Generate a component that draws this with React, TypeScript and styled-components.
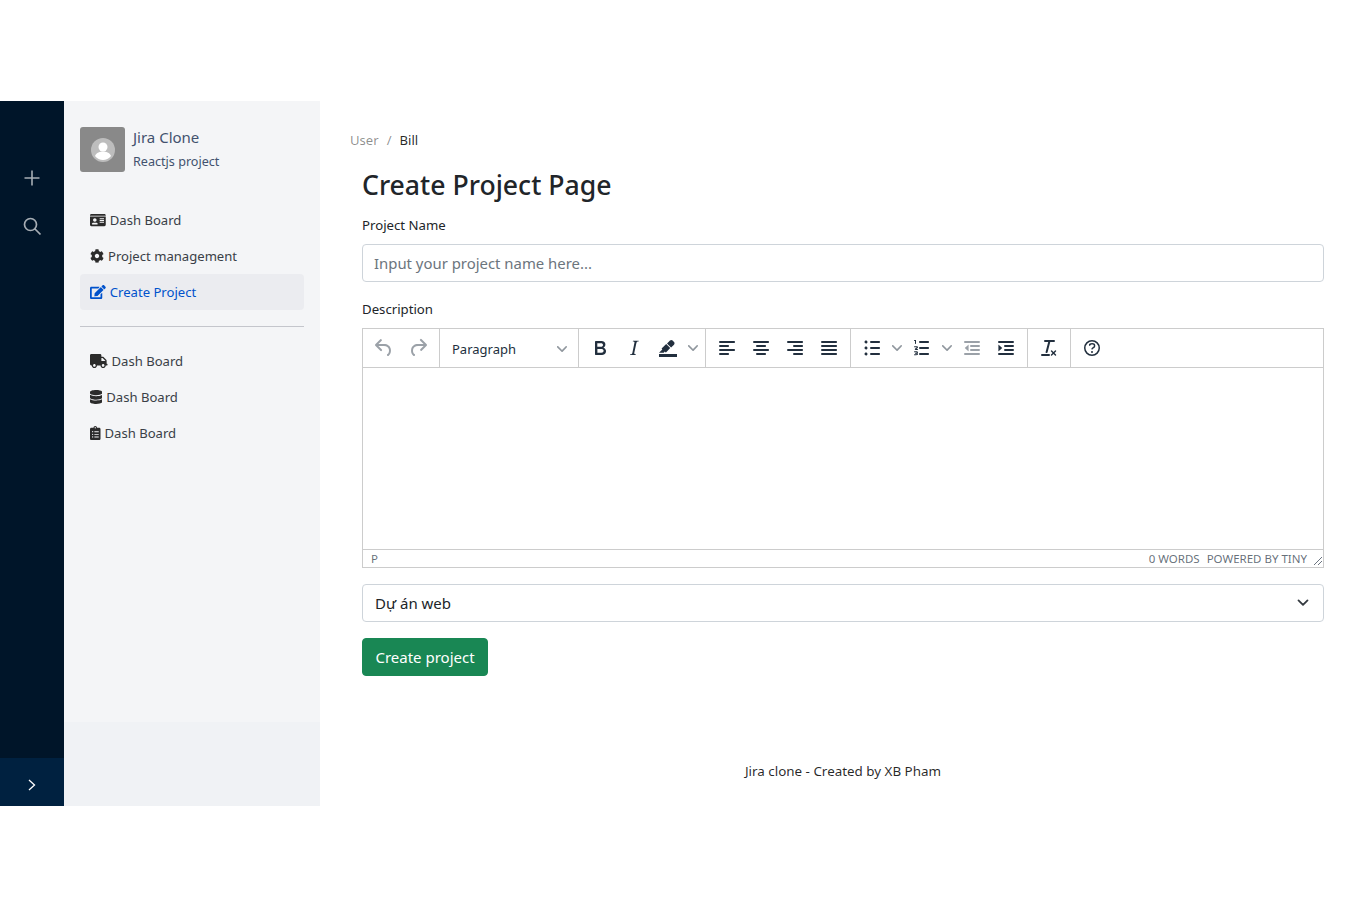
import React from "react";
import styled, { createGlobalStyle } from "styled-components";
import { FaIdCard, FaCog, FaEdit, FaTruck, FaDatabase, FaClipboardList } from "react-icons/fa";

const Global = createGlobalStyle`
  * { box-sizing: border-box; }
  html, body { margin: 0; background: #fff; }
  body { font-family: "Noto Sans", "Open Sans", sans-serif; font-size: 16px; color: #212529; }
`;

const Page = styled.div`
  padding-top: 101px;
  height: 907px;
`;
const Layout = styled.div`
  display: flex;
  height: 705px;
`;
const Rail = styled.aside`
  width: 64px;
  background: #001529;
  display: flex;
  flex-direction: column;
  align-items: center;
`;
const RailIcons = styled.div`
  flex: 1;
  padding-top: 65px;
  display: flex;
  flex-direction: column;
  gap: 24px;
  align-items: center;
  color: rgba(255, 255, 255, 0.65);
`;
const RailToggle = styled.div`
  width: 100%;
  height: 48px;
  padding-top: 6px;
  background: #002140;
  color: #fff;
  display: flex;
  align-items: center;
  justify-content: center;
`;
const SideWrap = styled.div`
  width: 256px;
  background: #f0f2f5;
`;
const Side = styled.nav`
  height: 621px;
  background: #f4f5f7;
  padding: 26px 16px 0;
`;
const Brand = styled.div`
  display: flex;
  gap: 8px;
  margin-bottom: 30px;
`;
const Avatar = styled.div`
  width: 45px;
  height: 45px;
  border-radius: 3px;
  background: #898989;
  display: flex;
  align-items: center;
  justify-content: center;
`;
const BrandText = styled.div`
  display: flex;
  flex-direction: column;
  color: #42526e;
`;
const BrandTitle = styled.div`
  font-size: 15px;
  line-height: 22px;
  margin-top: -1px;
`;
const BrandSub = styled.div`
  font-size: 12.6px;
  line-height: 20px;
  margin-top: 4px;
`;
const Item = styled.div<{ $active?: boolean; $iconWidth: number }>`
  height: 36px;
  display: flex;
  align-items: center;
  gap: 4px;
  padding: 0 10px;
  font-size: 13.1px;
  border-radius: 4px;
  color: ${(p) => (p.$active ? "#0052cc" : "#3a3f47")};
  background: ${(p) => (p.$active ? "#ebecf0" : "transparent")};
  svg {
    height: 14px;
    width: ${(p) => p.$iconWidth}px;
    flex: none;
    color: ${(p) => (p.$active ? "#0052cc" : "#2b2b2b")};
  }
`;
const Divider = styled.hr`
  border: 0;
  height: 1px;
  background: #c4c6cc;
  margin: 16px 0;
`;
const Main = styled.main`
  flex: 1;
  min-width: 0;
  display: flex;
  flex-direction: column;
`;
const Content = styled.div`
  flex: 1;
  padding: 28px 42px 0 30px;
`;
const Crumbs = styled.div`
  font-size: 13.1px;
  line-height: 22px;
  color: rgba(0, 0, 0, 0.45);
  display: flex;
  gap: 8px;
  margin-bottom: 17px;
`;
const CrumbNow = styled.span`
  color: rgba(0, 0, 0, 0.85);
`;
const Form = styled.div`
  padding-left: 12px;
`;
const Title = styled.h3`
  margin: 0 0 13px;
  font-size: 26.6px;
  font-weight: 500;
  line-height: 34px;
  color: #212529;
`;
const Label = styled.label`
  display: block;
  font-size: 13.2px;
  line-height: 21px;
  margin-bottom: 8px;
`;
const Field = styled.div`
  margin-bottom: 17px;
`;
const Input = styled.input`
  display: block;
  width: 100%;
  height: 38px;
  border: 1px solid #ced4da;
  border-radius: 4px;
  padding: 6px 11px;
  font: inherit;
  font-size: 14.9px;
  color: #212529;
  &::placeholder { color: #6c757d; opacity: 1; }
`;
const Editor = styled.div`
  height: 240px;
  border: 1px solid #ccc;
  display: flex;
  flex-direction: column;
`;
const Toolbar = styled.div`
  height: 39px;
  border-bottom: 1px solid #ccc;
  display: flex;
`;
const Group = styled.div`
  display: flex;
  align-items: center;
  padding: 0 4px;
  border-right: 1px solid #ccc;
  &:last-child { border-right: 0; }
`;
const Tool = styled.span<{ $muted?: boolean; $wide?: boolean }>`
  width: ${(p) => (p.$wide ? 50 : 34)}px;
  height: 34px;
  display: flex;
  align-items: center;
  color: ${(p) => (p.$muted ? "rgba(34,47,62,.45)" : "#222f3e")};
  padding-left: 5px;
  flex-shrink: 0;
  svg { fill: currentColor; display: block; flex-shrink: 0; }
`;
const Chevron = styled.svg`
  margin-left: 8px;
  &&& { fill: rgba(34, 47, 62, 0.5); }
`;
const FormatSelect = styled.div`
  width: 139px;
  height: 38px;
  padding: 1px 11px 0 12px;
  border-right: 1px solid #ccc;
  display: flex;
  align-items: center;
  justify-content: space-between;
  font-size: 13px;
  color: #222f3e;
`;
const EditArea = styled.div`
  flex: 1;
`;
const Status = styled.div`
  height: 18px;
  border-top: 1px solid #ccc;
  display: flex;
  align-items: center;
  padding: 0 0 0 8px;
  font-size: 11.5px;
  color: rgba(34, 47, 62, 0.7);
`;
const StatusRight = styled.div`
  margin-left: auto;
  display: flex;
  align-items: center;
  gap: 7px;
  text-transform: uppercase;
`;
const Grip = styled.svg`
  align-self: flex-end;
  margin-left: -1px;
`;
const SelectWrap = styled.div`
  position: relative;
  margin: 16px 0;
`;
const Select = styled.select`
  display: block;
  width: 100%;
  height: 38px;
  appearance: none;
  background: #fff;
  border: 1px solid #ced4da;
  border-radius: 4px;
  padding: 0 36px 0 12px;
  font: inherit;
  font-size: 15px;
  color: #212529;
`;
const SelectArrow = styled.svg`
  position: absolute;
  right: 15px;
  top: 14px;
  pointer-events: none;
`;
const Button = styled.button`
  display: block;
  width: 126px;
  height: 38px;
  border: 1px solid #198754;
  border-radius: 4px;
  background: #198754;
  color: #fff;
  font: inherit;
  font-size: 15px;
  padding: 0;
`;
const Footer = styled.footer`
  height: 70px;
  display: flex;
  align-items: center;
  justify-content: center;
  font-size: 13.4px;
  color: rgba(0, 0, 0, 0.85);
`;

const P = ({ d, s = 24 }: { d: string; s?: number }) => (
  <svg width={s} height={s} viewBox="0 0 24 24"><path d={d} fillRule="evenodd" /></svg>
);
const Down = () => (
  <Chevron width="10" height="10" viewBox="0 0 10 10"><path d="M8.7 2.2c.3-.3.8-.3 1 0 .4.4.4.9 0 1.2L5.7 7.800c-.3.3-.9.3-1.200 0L.2 3.400a.8.8 0 0 1 0-1.200c.3-.3.8-.3 1.100 0L5 6l3.700-3.800z" /></Chevron>
);

const I = {
  undo: "M6.4 8H12c3.7 0 6.2 2 6.8 5.1.6 2.7-.4 5.6-2.3 6.8a1 1 0 0 1-1-1.8c1.1-.6 1.8-2.7 1.4-4.6-.5-2.1-2.1-3.5-4.9-3.5H6.4l3.3 3.3a1 1 0 1 1-1.4 1.4l-5-5a1 1 0 0 1 0-1.4l5-5a1 1 0 0 1 1.4 1.4L6.4 8z",
  redo: "M17.6 10H12c-2.8 0-4.4 1.4-4.9 3.5-.4 2 .3 4 1.4 4.6a1 1 0 1 1-1 1.8c-2-1.2-2.9-4.1-2.3-6.8.6-3 3-5.1 6.8-5.1h5.6l-3.3-3.3a1 1 0 1 1 1.4-1.4l5 5a1 1 0 0 1 0 1.4l-5 5a1 1 0 0 1-1.4-1.4l3.3-3.3z",
  bold: "M7.8 19c-.3 0-.5 0-.6-.2l-.2-.5V5.700c0-.2 0-.4.2-.5l.6-.2h5c1.500 0 2.700.3 3.500 1 .7.6 1.100 1.400 1.100 2.500a3 3 0 0 1-.6 1.900c-.4.6-1 1-1.600 1.200.4.1.9.3 1.300.6s.8.7 1 1.200c.4.4.5 1 .5 1.600 0 1.300-.4 2.300-1.300 3-.8.7-2.100 1-3.800 1H7.800zm5-8.300c.6 0 1.200-.1 1.600-.5.4-.3.6-.7.6-1.300 0-1.100-.8-1.700-2.300-1.700H9.300v3.500h3.400zm.5 6c.7 0 1.300-.1 1.700-.4.4-.4.6-.9.6-1.500s-.2-1-.7-1.400c-.4-.3-1-.4-2-.4H9.400v3.800h4z",
  italic: "M16.7 4.7l-.1.9h-.3c-.6 0-1 0-1.4.3-.3.3-.4.6-.5 1.1l-2.1 9.8v.6c0 .5.4.8 1.4.8h.2l-.2.8H8l.2-.8h.2c1.1 0 1.8-.5 2-1.5l2-9.8.1-.5c0-.6-.4-.8-1.4-.8h-.3l.2-.9h5.8z",
  mark: "M3 18h18v3H3zM7.7 16.7H3l3.3-3.3-.7-.8L10.2 8l4 4.1-4 4.2c-.2.2-.6.2-.8 0l-.6-.7-1.1 1.1zm5-7.5L11 7.4l3-2.9a2 2 0 0 1 2.6 0L18 6c.7.7.7 2 0 2.7l-2.9 2.9-1.8-1.8-.5-.6",
  left: "M5 5h14c.6 0 1 .4 1 1s-.4 1-1 1H5a1 1 0 1 1 0-2zm0 4h8c.6 0 1 .4 1 1s-.4 1-1 1H5a1 1 0 1 1 0-2zm0 8h8c.6 0 1 .4 1 1s-.4 1-1 1H5a1 1 0 0 1 0-2zm0-4h14c.6 0 1 .4 1 1s-.4 1-1 1H5a1 1 0 0 1 0-2z",
  center: "M5 5h14c.6 0 1 .4 1 1s-.4 1-1 1H5a1 1 0 1 1 0-2zm3 4h8c.6 0 1 .4 1 1s-.4 1-1 1H8a1 1 0 1 1 0-2zm0 8h8c.6 0 1 .4 1 1s-.4 1-1 1H8a1 1 0 0 1 0-2zm-3-4h14c.6 0 1 .4 1 1s-.4 1-1 1H5a1 1 0 0 1 0-2z",
  right: "M5 5h14c.6 0 1 .4 1 1s-.4 1-1 1H5a1 1 0 1 1 0-2zm6 4h8c.6 0 1 .4 1 1s-.4 1-1 1h-8a1 1 0 0 1 0-2zm0 8h8c.6 0 1 .4 1 1s-.4 1-1 1h-8a1 1 0 0 1 0-2zm-6-4h14c.6 0 1 .4 1 1s-.4 1-1 1H5a1 1 0 0 1 0-2z",
  justify: "M5 5h14c.6 0 1 .4 1 1s-.4 1-1 1H5a1 1 0 1 1 0-2zm0 4h14c.6 0 1 .4 1 1s-.4 1-1 1H5a1 1 0 1 1 0-2zm0 4h14c.6 0 1 .4 1 1s-.4 1-1 1H5a1 1 0 0 1 0-2zm0 4h14c.6 0 1 .4 1 1s-.4 1-1 1H5a1 1 0 0 1 0-2z",
  ul: "M11 5h8c.6 0 1 .4 1 1s-.4 1-1 1h-8a1 1 0 0 1 0-2zm0 6h8c.6 0 1 .4 1 1s-.4 1-1 1h-8a1 1 0 0 1 0-2zm0 6h8c.6 0 1 .4 1 1s-.4 1-1 1h-8a1 1 0 0 1 0-2zM4.5 6c0-.4.1-.8.4-1 .3-.4.7-.5 1.1-.5.4 0 .8.1 1 .4.4.3.5.7.5 1.1 0 .4-.1.8-.4 1-.3.4-.7.5-1.1.5-.4 0-.8-.1-1-.4-.4-.3-.5-.7-.5-1.1zm0 6c0-.4.1-.8.4-1 .3-.4.7-.5 1.1-.5.4 0 .8.1 1 .4.4.3.5.7.5 1.1 0 .4-.1.8-.4 1-.3.4-.7.5-1.1.5-.4 0-.8-.1-1-.4-.4-.3-.5-.7-.5-1.1zm0 6c0-.4.1-.8.4-1 .3-.4.7-.5 1.1-.5.4 0 .8.1 1 .4.4.3.5.7.5 1.1 0 .4-.1.8-.4 1-.3.4-.7.5-1.1.5-.4 0-.8-.1-1-.4-.4-.3-.5-.7-.5-1.1z",
  ol: "M10 17h8c.6 0 1 .4 1 1s-.4 1-1 1h-8a1 1 0 0 1 0-2zm0-6h8c.6 0 1 .4 1 1s-.4 1-1 1h-8a1 1 0 0 1 0-2zm0-6h8c.6 0 1 .4 1 1s-.4 1-1 1h-8a1 1 0 1 1 0-2zM6 4v3.500c0 .3-.2.5-.5.5a.5.5 0 0 1-.5-.5V5h-.5a.5.5 0 0 1 0-1H6zm-1 8.800l.2-.2 1.500-1.200-.1-.2H4.500a.5.5 0 1 1 0-1h2.100c.8 0 1.400.4 1.400 1 0 .4-.2.8-.6 1.100l-1 .8H7.500a.5.5 0 1 1 0 1H5.500c-.4 0-.7-.2-.7-.5s.1-.6.2-.8zm2.200 4.200c.5.2.8.5.8 1 0 .8-.8 1.200-1.700 1.200H4.500a.5.5 0 1 1 0-1h1.800c.3 0 .5-.1.5-.2s-.2-.3-.5-.3H5.500a.5.5 0 1 1 0-1h.8c.3 0 .5-.1.5-.2s-.2-.2-.5-.2H4.500a.5.5 0 1 1 0-1h1.800c.9 0 1.700.4 1.700 1.200 0 .4-.3.7-.8.8z",
  outdent: "M19 5a1 1 0 0 1 0 2H5a1 1 0 1 1 0-2h14zm0 4a1 1 0 0 1 0 2h-8a1 1 0 0 1 0-2h8zm0 4a1 1 0 0 1 0 2h-8a1 1 0 0 1 0-2h8zm0 4a1 1 0 0 1 0 2H5a1 1 0 0 1 0-2h14zM8.600 9.100v5.800c0 .3-.3.4-.5.2L5 12.300a.4.4 0 0 1 0-.6l3.100-2.800c.2-.2.5-.1.5.2z",
  indent: "M19 5a1 1 0 0 1 0 2H5a1 1 0 1 1 0-2h14zm0 4a1 1 0 0 1 0 2h-8a1 1 0 0 1 0-2h8zm0 4a1 1 0 0 1 0 2h-8a1 1 0 0 1 0-2h8zm0 4a1 1 0 0 1 0 2H5a1 1 0 0 1 0-2h14zM4.400 9.100v5.800c0 .3.3.4.5.2L8 12.300a.4.4 0 0 0 0-.6L4.900 8.900c-.2-.2-.5-.1-.5.2z",
  clear: "M13.2 6a1 1 0 0 1 0 .2l-2.6 10a1 1 0 0 1-1 .8h-.2a.8.8 0 0 1-.8-1l2.600-10H8a1 1 0 1 1 0-2h9a1 1 0 0 1 0 2h-3.800zM5 18h7a1 1 0 0 1 0 2H5a1 1 0 0 1 0-2zm13 1.500L16.500 18 15 19.500a.7.7 0 0 1-1-1l1.500-1.500-1.500-1.500a.7.7 0 0 1 1-1l1.500 1.500 1.500-1.500a.7.7 0 0 1 1 1L17.500 17l1.500 1.500a.7.7 0 0 1-1 1z",
  help: "M12 5.500a6.500 6.500 0 1 0 0 13 6.500 6.500 0 0 0 0-13zm0-1.500a8 8 0 1 1 0 16 8 8 0 0 1 0-16zM9.600 9.700a.7.7 0 0 1-.7-.8c0-1.100 1.500-1.800 3.200-1.800 1.800 0 3.200.8 3.200 2.400 0 1.400-.4 2.100-1.500 2.800-.2 0-.3.1-.3.2a2 2 0 0 0-.8.8.8.8 0 0 1-1.400-.6c.3-.7.8-1 1.300-1.500l.4-.2c.7-.4.8-.6.8-1.500 0-.5-.6-.9-1.700-.9-.9 0-1.700.4-1.700.6 0 .5-.3.8-.8.8zM12 15a1 1 0 1 1 0 2 1 1 0 0 1 0-2z",
};

export default function App() {
  return (
    <Page>
      <Global />
      <Layout>
        <Rail>
          <RailIcons>
            <svg width="24" height="24" viewBox="0 0 24 24" fill="none" stroke="currentColor" strokeWidth="1.6"><path d="M12 4.500v15M4.500 12h15" /></svg>
            <svg width="24" height="24" viewBox="0 0 24 24" fill="none" stroke="currentColor" strokeWidth="1.7"><circle cx="10.500" cy="10.500" r="6" /><path d="M15 15l5.500 5.500" /></svg>
          </RailIcons>
          <RailToggle>
            <svg width="14" height="14" viewBox="0 0 14 14" fill="none" stroke="currentColor" strokeWidth="1.3"><path d="M4 2l5.500 5L4 12" /></svg>
          </RailToggle>
        </Rail>
        <SideWrap>
          <Side>
            <Brand>
              <Avatar>
                <svg width="26" height="26" viewBox="0 0 26 26">
                  <circle cx="13" cy="13" r="12" fill="#bdbdbd" />
                  <circle cx="13" cy="10" r="4.500" fill="#fff" />
                  <path d="M5 19c1.500-3.500 5-4.500 8-4.500s6.500 1 8 4.500c-2 2.500-5 4-8 4s-6-1.500-8-4z" fill="#fff" />
                </svg>
              </Avatar>
              <BrandText>
                <BrandTitle>Jira Clone</BrandTitle>
                <BrandSub>Reactjs project</BrandSub>
              </BrandText>
            </Brand>
            <Item $iconWidth={15.75}><FaIdCard />Dash Board</Item>
            <Item $iconWidth={14}><FaCog />Project management</Item>
            <Item $active $iconWidth={15.75}><FaEdit />Create Project</Item>
            <Divider />
            <Item $iconWidth={17.5}><FaTruck />Dash Board</Item>
            <Item $iconWidth={12.25}><FaDatabase />Dash Board</Item>
            <Item $iconWidth={10.5}><FaClipboardList />Dash Board</Item>
          </Side>
        </SideWrap>
        <Main>
          <Content>
            <Crumbs><span>User</span><span>/</span><CrumbNow>Bill</CrumbNow></Crumbs>
            <Form>
              <Title>Create Project Page</Title>
              <Field>
                <Label>Project Name</Label>
                <Input placeholder="Input your project name here..." />
              </Field>
              <Label>Description</Label>
              <Editor>
                <Toolbar>
                  <Group>
                    <Tool $muted><P d={I.undo} /></Tool>
                    <Tool $muted><P d={I.redo} /></Tool>
                  </Group>
                  <FormatSelect>Paragraph<Down /></FormatSelect>
                  <Group>
                    <Tool><P d={I.bold} /></Tool>
                    <Tool><P d={I.italic} /></Tool>
                    <Tool $wide><P d={I.mark} /><Down /></Tool>
                  </Group>
                  <Group>
                    <Tool><P d={I.left} /></Tool>
                    <Tool><P d={I.center} /></Tool>
                    <Tool><P d={I.right} /></Tool>
                    <Tool><P d={I.justify} /></Tool>
                  </Group>
                  <Group>
                    <Tool $wide><P d={I.ul} /><Down /></Tool>
                    <Tool $wide><P d={I.ol} /><Down /></Tool>
                    <Tool $muted><P d={I.outdent} /></Tool>
                    <Tool><P d={I.indent} /></Tool>
                  </Group>
                  <Group>
                    <Tool><P d={I.clear} /></Tool>
                  </Group>
                  <Group>
                    <Tool><P d={I.help} /></Tool>
                  </Group>
                </Toolbar>
                <EditArea />
                <Status>
                  <span>P</span>
                  <StatusRight>
                    <span>0 words</span>
                    <span>Powered by Tiny</span>
                    <Grip width="10" height="10" viewBox="0 0 10 10" stroke="#6b7480" fill="none"><path d="M1 9l8-8M5 9l4-4" /></Grip>
                  </StatusRight>
                </Status>
              </Editor>
              <SelectWrap>
                <Select defaultValue="web"><option value="web">Dự án web</option></Select>
                <SelectArrow width="12" height="10" viewBox="0 0 16 13" fill="none" stroke="#343a40" strokeWidth="2.4" strokeLinecap="round" strokeLinejoin="round"><path d="M2 3l6 6 6-6" /></SelectArrow>
              </SelectWrap>
              <Button>Create project</Button>
            </Form>
          </Content>
          <Footer>Jira clone - Created by XB Pham</Footer>
        </Main>
      </Layout>
    </Page>
  );
}
